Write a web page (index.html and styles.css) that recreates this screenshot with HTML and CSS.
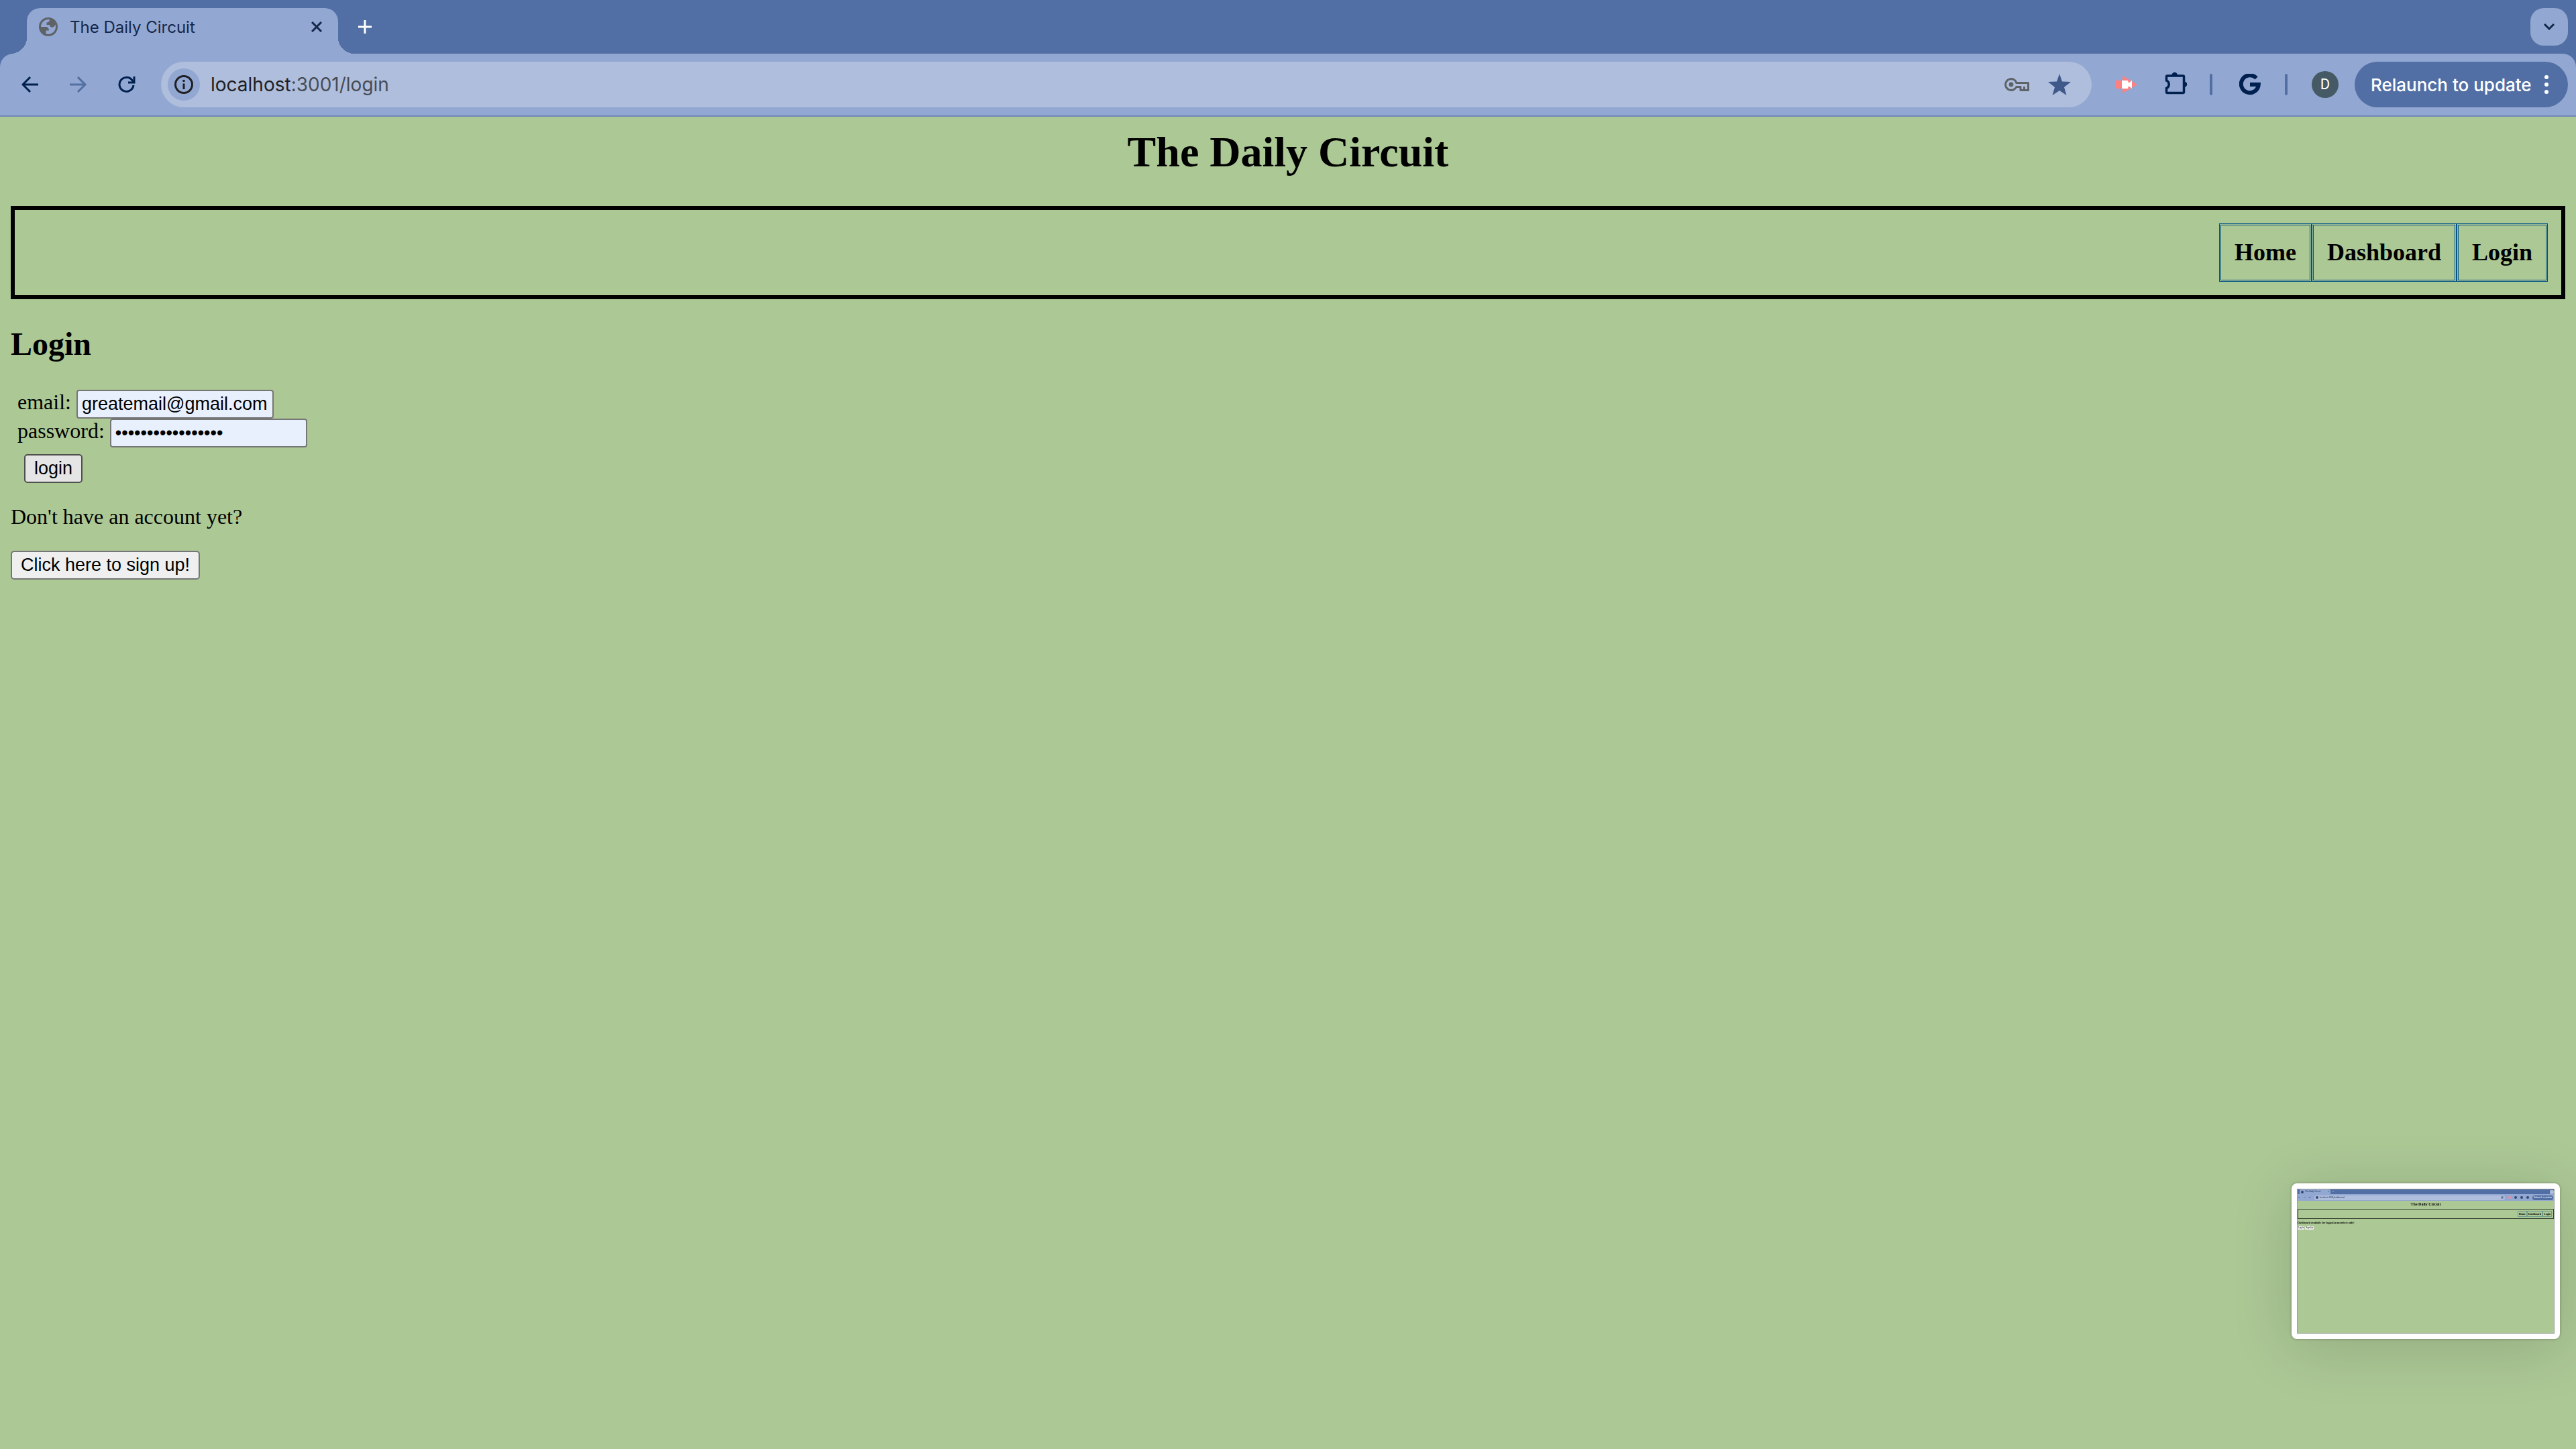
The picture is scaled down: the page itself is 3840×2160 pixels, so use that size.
FILE: index.html
```html
<!DOCTYPE html>
<html lang="en">
<head>
<meta charset="utf-8">
<title>The Daily Circuit</title>
<link rel="stylesheet" href="styles.css">
</head>
<body>
<div class="browser">
  <div class="tabstrip">
    <div class="tab">
      <svg class="favicon" viewBox="0 0 28 28"><circle cx="14" cy="14" r="14" fill="#5f6368"/><path d="M16 3.200C9.500 2.200 3.500 6.500 3 14h6.500c3.500 0 5.500 2 5.500 5.500h-4.500V24.500c8 2 14.500-3.500 14.500-10.500 0-1.500-.2-2.500-.6-3.500-1 3-3 4.500-5.400 4.200-2-.3-3-1.700-3-3.700h-4.500V7.500c2.500 0 4.500-1.500 4.500-4.300z" fill="#92a7d1"/></svg>
      <span class="tab-title">The Daily Circuit</span>
      <button class="icon-button" aria-label="Close tab"><svg width="16" height="16" viewBox="0 0 16 16"><path d="M1 1l14 14M15 1L1 15" stroke="#14284b" stroke-width="3" fill="none"/></svg></button>
    </div>
    <button class="icon-button new-tab" aria-label="New tab"><svg width="20" height="20" viewBox="0 0 20 20"><path d="M10 0v20M0 10h20" stroke="#fff" stroke-width="3"/></svg></button>
    <button class="tab-search" aria-label="Search tabs"><svg width="18" height="12" viewBox="0 0 18 12"><path d="M2 2l7 7 7-7" stroke="#14284b" stroke-width="3" fill="none"/></svg></button>
  </div>
  <div class="toolbar">
    <div class="history">
      <button class="icon-button" aria-label="Back"><svg width="26" height="24" viewBox="0 0 26 24"><path d="M25 12H3M13 1L2 12l11 11" stroke="#00214f" stroke-width="3" fill="none"/></svg></button>
      <button class="icon-button" aria-label="Forward"><svg width="26" height="24" viewBox="0 0 26 24"><path d="M0 12h22M12 1l11 11-11 11" stroke="#5370a3" stroke-width="3" fill="none"/></svg></button>
      <button class="icon-button" aria-label="Reload"><svg width="26" height="26" viewBox="0 0 26 26"><path d="M23 14a10.500 10.500 0 1 1-2.500-8L23 9" stroke="#00214f" stroke-width="3" fill="none"/><path d="M25.500 1v10.500H15v-3h7.500V1z" fill="#00214f"/></svg></button>
    </div>
    <div class="omnibox">
      <button class="site-info" aria-label="Site information"><svg width="28" height="28" viewBox="0 0 28 28"><circle cx="14" cy="14" r="12.500" fill="none" stroke="#1f2023" stroke-width="3"/><path d="M14 12.500V21" stroke="#1f2023" stroke-width="3"/><circle cx="14" cy="8.500" r="1.800" fill="#1f2023"/></svg></button>
      <span class="url">localhost<span class="path">:3001/login</span></span>
      <svg width="38" height="20" viewBox="0 0 38 20"><path d="M10 1.500a8.500 8.500 0 1 0 7.800 12H24V18.500h11.500V7.500H17.800A8.500 8.500 0 0 0 10 1.500z" fill="none" stroke="#5f6368" stroke-width="3" stroke-linejoin="round"/><circle cx="10" cy="10" r="3.400" fill="#5f6368"/><path d="M29.500 13v5" stroke="#5f6368" stroke-width="3"/></svg>
      <svg width="34" height="32" viewBox="0 0 34 32"><path d="M17 0l4 11.500 13 .5-10 8 3.500 12L17 25 6.500 32 10 20 0 12l13-.5z" fill="#3f5a8a"/></svg>
    </div>
    <svg class="ext" width="32" height="26" viewBox="0 0 32 26"><path d="M0 7h10V0l22 13-22 13v-7H0z" fill="#ff8080"/><path d="M9 7h9l1 4 5-4v12l-5-4-1 4H9z" fill="#fff"/></svg>
    <svg class="puzzle" width="34" height="34" viewBox="0 0 34 34"><path d="M4 6h23a1.500 1.500 0 0 1 1.500 1.500V30a1.500 1.500 0 0 1-1.500 1.500H4A1.500 1.500 0 0 1 2.500 30v-5.500c5-2 5-9.500 0-11.500V7.500A1.500 1.500 0 0 1 4 6z" fill="none" stroke="#00214f" stroke-width="3.500"/><path d="M10.500 5a4.200 4.200 0 0 1 8.400 0zM29 14.500a4.200 4.200 0 0 1 0 8.400z" fill="#00214f"/></svg>
    <span class="divider"></span>
    <svg class="google" width="32" height="32" viewBox="0 0 32 32"><path d="M25.500 6.500A13 13 0 1 0 28.800 16H16" fill="none" stroke="#00214f" stroke-width="6"/></svg>
    <span class="divider"></span>
    <span class="avatar">D</span>
    <button class="relaunch">Relaunch to update <svg width="8" height="28" viewBox="0 0 8 28"><circle cx="4" cy="3" r="3" fill="#fff"/><circle cx="4" cy="14" r="3" fill="#fff"/><circle cx="4" cy="25" r="3" fill="#fff"/></svg></button>
  </div>
</div>
<main class="page">
  <h1>The Daily Circuit</h1>
  <nav class="nav"><a href="#home">Home</a><a href="#dashboard">Dashboard</a><a href="#login">Login</a></nav>
  <h2>Login</h2>
  <form class="login-form">
    <div class="field"><label for="email">email:</label><input id="email" type="email" value="greatemail@gmail.com"></div>
    <div class="field"><label for="password">password:</label><input id="password" type="password" value="abcdefghijklmnopq"></div>
    <button class="button submit" type="button">login</button>
  </form>
  <p>Don't have an account yet?</p>
  <button class="button" type="button">Click here to sign up!</button>
</main>
<aside class="preview">
  <div class="mini-tabs"><span class="mini-tab"><i></i>The Daily Circuit<b>×</b></span><span>+</span><em></em></div>
  <div class="mini-bar"><span>←</span><span class="faint">→</span><span>⟳</span><span class="mini-url"><i></i>localhost:3001/dashboard<i class="star"></i></span><i class="red"></i><i></i><i></i><i></i><span class="mini-pill">Relaunch to update</span></div>
  <div class="mini-page">
    <div class="mini-title">The Daily Circuit</div>
    <div class="mini-nav"><span>Home</span><span>Dashboard</span><span>Login</span></div>
    <div class="mini-text">Dashboard available for logged-in members only!</div>
    <div class="mini-buttons"><span>Log In</span><span>Sign Up</span></div>
  </div>
</aside>
</body>
</html>
```
FILE: styles.css
```css
* { box-sizing: border-box; }
body { margin: 0; min-height: 100vh; background: #acc895; color: #000; font: 32px/37px "Liberation Serif", serif; }
svg { display: block; flex: none; }
button { font: inherit; margin: 0; }

.browser { background: #516fa5; font-family: Inter, sans-serif; }
.tabstrip { display: flex; align-items: flex-end; height: 80px; padding: 0 12px 0 40px; }
.tab { position: relative; display: flex; align-items: center; width: 464px; height: 68px; padding: 0 24px 12px 18px; border-radius: 20px 20px 0 0; background: #92a7d1; color: #14284b; font-size: 24px; }
.tab::before, .tab::after { content: ""; position: absolute; bottom: 0; width: 24px; height: 24px; }
.tab::before { right: 100%; background: radial-gradient(circle at 0 0, transparent 24px, #92a7d1 24px); }
.tab::after { left: 100%; background: radial-gradient(circle at 100% 0, transparent 24px, #92a7d1 24px); }
.favicon { width: 28px; height: 28px; margin-right: 18px; }
.tab-title { flex: 1; }
.icon-button { display: block; padding: 0; border: 0; background: none; }
.new-tab { margin: 0 auto 30px 30px; }
.tab-search { display: grid; place-items: center; width: 56px; height: 56px; margin-bottom: 12px; padding: 0; border: 0; border-radius: 20px; background: #92a7d1; }

.toolbar { display: flex; align-items: center; height: 94px; padding: 10px 12px; border-bottom: 2px solid #7189b9; border-radius: 20px 20px 0 0; background: #92a7d1; }
.history { display: flex; align-items: center; gap: 46px; width: 228px; padding-left: 20px; }
.omnibox { display: flex; flex: 1; align-items: center; height: 68px; padding: 0 31px 0 10px; border-radius: 34px; background: #aebedc; }
.site-info { display: grid; place-items: center; width: 48px; height: 48px; padding: 0; border: 0; border-radius: 50%; background: #92a7d1; }
.url { flex: 1; margin-left: 16px; color: #1f2023; font-size: 28px; }
.path { color: #474c57; }
.omnibox > svg + svg { margin-left: 27px; }
.ext { margin-left: 36px; }
.puzzle { margin: 0 33px 4px 41px; }
.divider { width: 4px; height: 32px; border-radius: 2px; background: #516fa5; }
.google { margin: 0 36px 0 40px; }
.avatar { display: grid; place-items: center; width: 40px; height: 40px; margin: 0 24px 0 36px; border-radius: 50%; background: #455a64; color: #fff; font: 22px/40px Roboto, sans-serif; }
.relaunch { display: flex; align-items: center; justify-content: space-between; width: 318px; height: 68px; padding: 0 28px 0 24px; border: 0; border-radius: 34px; background: #516fa5; color: #fff; font-size: 26px; font-weight: 500; white-space: nowrap; }

.page { padding: 16px; }
h1 { margin: 0 0 43px; font-size: 64px; line-height: 74px; text-align: center; }
h2 { margin: 39px 0 41px; font-size: 48px; line-height: 55px; }
p { margin: 32px 0; }
.nav { display: flex; justify-content: flex-end; padding: 20px; border: 6px solid #000; }
.nav a { padding: 20px; border: 3px double #005288; color: #000; font-size: 36px; font-weight: bold; line-height: 41px; text-decoration: none; }
.login-form { padding-left: 10px; }
.field { display: flex; align-items: flex-start; gap: 8px; }
.field input { width: 294px; height: 43px; padding: 2px 6px; border: 2px solid #767676; border-radius: 4px; background: #e8f0fe; color: #000; font: 27px "Liberation Sans", sans-serif; }
.button { display: block; height: 43px; padding: 0 13px; border: 2px solid #767676; border-radius: 5px; background: #efefef; color: #000; font: 27px/37px "Liberation Sans", sans-serif; }
.submit { margin: 10px 0 0 10px; border-color: #4f4f4f; background: #e5e5e5; }

.preview { position: fixed; right: 24px; bottom: 164px; width: 400px; height: 232px; border: 8px solid #fff; border-radius: 8px; background: #acc895; box-shadow: 0 0 4px rgba(0,0,0,.3), 0 12px 90px rgba(0,0,0,.15); font: 3px/7px Inter, sans-serif; outline: 1px solid #9aa09a; outline-offset: -9px; }
.preview i { width: 4px; height: 4px; border-radius: 50%; background: #314870; }
.preview .red { background: #f08c9c; }
.preview .star { margin-left: auto; background: #6f7f9f; }
.mini-tabs { display: flex; align-items: center; gap: 3px; height: 8px; padding: 1px 1px 0 4px; background: #516fa5; color: #fff; }
.mini-tab { display: flex; align-items: center; gap: 2px; width: 46px; height: 7px; padding: 0 2px; border-radius: 2px 2px 0 0; background: #92a7d1; color: #14284b; }
.mini-tab b { margin-left: auto; }
.mini-tabs em { width: 6px; height: 6px; margin-left: auto; border-radius: 2px; background: #aebedc; }
.mini-bar { display: flex; align-items: center; gap: 5px; height: 10px; padding: 0 2px; background: #92a7d1; color: #14284b; }
.mini-bar .faint { color: #5370a3; }
.mini-url { display: flex; flex: 1; align-items: center; gap: 2px; height: 7px; padding: 0 2px; border-radius: 4px; background: #aebedc; }
.mini-pill { width: 31px; height: 7px; padding: 0 2px; border-radius: 4px; background: #516fa5; color: #fff; white-space: nowrap; }
.mini-page { padding: 1px; font-family: "Liberation Serif", serif; font-weight: bold; }
.mini-title { height: 11px; font-size: 6px; line-height: 8px; text-align: center; }
.mini-nav { display: flex; justify-content: flex-end; height: 15px; padding: 2px; border: 1px solid #344030; font-size: 4px; }
.mini-nav span { padding: 0 1px; border: 1px solid #6f9e91; line-height: 7px; }
.mini-text { margin-top: 3px; font-size: 4px; line-height: 5px; }
.mini-buttons { display: flex; gap: 1px; margin-top: 3px; font: 3px/5px "Liberation Sans", sans-serif; }
.mini-buttons span { padding: 0 1px; border-radius: 1px; background: #efefef; }
```
